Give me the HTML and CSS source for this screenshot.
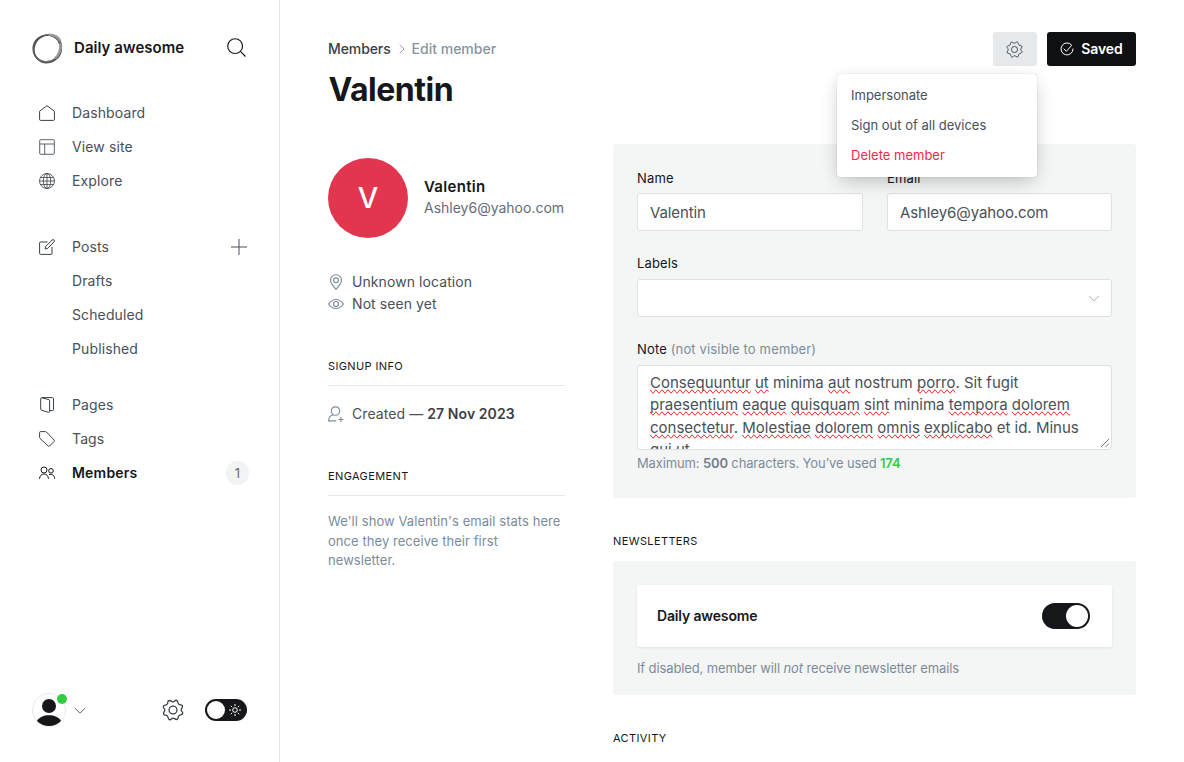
FILE: index.html
```html
<!DOCTYPE html>
<html lang="en">
<head>
<meta charset="utf-8">
<title>Edit member</title>
<link rel="stylesheet" href="styles.css">
</head>
<body>
<svg class="defs" aria-hidden="true">
  <symbol id="gear" viewBox="-12 -12 24 24">
    <path id="tooth" d="M0-8.9C1.8-8.9 2.1-11.3 3.95-10.5S4.9-7.7 6.29-6.29"/>
    <use href="#tooth" transform="rotate(45)"/><use href="#tooth" transform="rotate(90)"/><use href="#tooth" transform="rotate(135)"/><use href="#tooth" transform="rotate(180)"/><use href="#tooth" transform="rotate(225)"/><use href="#tooth" transform="rotate(270)"/><use href="#tooth" transform="rotate(315)"/>
    <circle r="4.3"/>
  </symbol>
</svg>
<div class="app">
  <aside class="sidebar">
    <header class="brand">
      <svg class="logo" viewBox="0 0 30 30"><ellipse cx="14.7" cy="15.2" rx="13.6" ry="13.2" stroke="#444" stroke-width="1.3"/><ellipse cx="15.4" cy="14.8" rx="14" ry="12.4" transform="rotate(-38 15 15)" stroke="#777" stroke-width="1.2"/><ellipse cx="14.8" cy="15.6" rx="12.5" ry="13.6" transform="rotate(25 15 15)" stroke="#555" stroke-width="1.3"/><path d="M16 1.800c5 0 9.500 2 11.200 6.200M27.400 10c.6 6-1 11-5 14.500" stroke="#999" stroke-width="2.400"/></svg>
      <span class="site">Daily awesome</span>
      <svg class="search" viewBox="0 0 18 18"><circle cx="7.700" cy="7.700" r="7"/><path d="M12.700 12.700 17.500 17.500"/></svg>
    </header>
    <nav class="nav">
      <div class="group">
        <a class="item"><svg viewBox="0 0 16 16"><path d="M.6 6.200 8 .7l7.400 5.500v8.200a1 1 0 0 1-1 1H1.600a1 1 0 0 1-1-1z"/></svg>Dashboard</a>
        <a class="item pale"><svg viewBox="0 0 16 16"><rect x=".7" y=".7" width="14.600" height="14.600" rx="1"/><path d="M.5 5h15M5.700 5v10.500"/></svg>View site</a>
        <a class="item"><svg class="thin" viewBox="0 0 16 16"><circle cx="8" cy="8" r="7.500"/><ellipse cx="8" cy="8" rx="3.700" ry="7.500"/><path d="M8 .5v15M.5 8h15M1.500 4.500h13M1.500 11.500h13"/></svg>Explore</a>
      </div>
      <div class="group">
        <a class="item"><svg viewBox="0 0 16 16"><path d="M8.500 3H1.600a1 1 0 0 0-1 1v10.400a1 1 0 0 0 1 1H12a1 1 0 0 0 1-1V8M6.200 10l.6-2.700 6.300-6.300a1.300 1.300 0 0 1 1.900 1.900L8.800 9.300z"/></svg>Posts<svg class="plus" viewBox="0 0 16 16"><path d="M8 0v16M0 8h16"/></svg></a>
        <a class="item sub">Drafts</a>
        <a class="item sub">Scheduled</a>
        <a class="item sub">Published</a>
      </div>
      <div class="group last">
        <a class="item"><svg viewBox="0 0 16 16"><path d="M2.700.600h10.800a1 1 0 0 1 1 1v11a1 1 0 0 1-1 1h-2.900M2.300.700l7.500 1.900a1 1 0 0 1 .8 1v10.900a.8.8 0 0 1-1 .8l-7-2a1 1 0 0 1-.9-1V1.600a.9.900 0 0 1 .6-.9z"/></svg>Pages</a>
        <a class="item"><svg viewBox="0 0 16 16"><path d="M1.600.600h5a1 1 0 0 1 .7.300l7.800 8.100a1.100 1.100 0 0 1 0 1.500l-4.500 4.500a1.100 1.100 0 0 1-1.500 0L.9 7.300a1 1 0 0 1-.3-.7v-5a1 1 0 0 1 1-1z"/></svg>Tags</a>
        <a class="item current"><svg viewBox="0 0 16 16"><circle cx="5" cy="5" r="3"/><circle cx="12" cy="5.800" r="2.300"/><path d="M.5 13.800c.3-3 2-4.800 4.500-4.800s4.200 1.800 4.500 4.800M10 9.700c3-1.200 5.500.600 5.600 4.100"/></svg>Members<span class="count">1</span></a>
      </div>
    </nav>
    <footer class="account">
      <span class="user"><svg viewBox="0 0 34 34"><circle class="ring" cx="17" cy="17" r="16.500"/><circle cx="17" cy="13" r="7"/><path d="M5 27.900c4-7.500 20-7.500 24 0a16.500 16.500 0 0 1-24 0z"/></svg><i class="online"></i></span>
      <svg class="chev" viewBox="0 0 12 7"><path d="M.5.700 6 6.200 11.500.700"/></svg>
      <svg class="settings"><use href="#gear"/></svg>
      <span class="theme"><i></i><svg viewBox="-6 -6 12 12"><circle r="2.300"/><path d="M0-6v2M0 6v-2M-6 0h2M6 0h-2M-4.200-4.200l1.400 1.400M4.200 4.200 2.800 2.800M-4.200 4.200l1.400-1.400M4.200-4.200 2.800-2.800"/></svg></span>
    </footer>
  </aside>
  <main class="main">
    <header class="top">
      <div>
        <div class="crumbs"><span>Members</span><svg viewBox="0 0 6 10"><path d="M.7.700 5 5 .7 9.300"/></svg><b>Edit member</b></div>
        <h1>Valentin</h1>
      </div>
      <div class="actions">
        <button class="gearbtn"><svg><use href="#gear"/></svg></button>
        <button class="saved"><svg viewBox="0 0 14 14"><path d="M11.800 3.300A6 6 0 1 0 13 6.500M3.800 6.700l2.500 2.600 5.500-6"/></svg>Saved</button>
        <div class="menu"><a>Impersonate</a><a>Sign out of all devices</a><a class="danger">Delete member</a></div>
      </div>
    </header>
    <div class="columns">
      <section class="profile">
        <div class="person"><span class="avatar">V</span><div><h3>Valentin</h3><p>Ashley6@yahoo.com</p></div></div>
        <div class="facts">
          <p><svg viewBox="0 0 16 16"><path d="M8 15.300C5 12 2.500 9.400 2.500 6.200a5.500 5.500 0 0 1 11 0c0 3.200-2.500 5.800-5.500 9.100z"/><circle cx="8" cy="6.300" r="2.400"/></svg>Unknown location</p>
          <p><svg viewBox="0 0 16 16"><path d="M.6 8C4.500 2 11.500 2 15.400 8 11.500 14 4.500 14 .6 8z"/><circle cx="8" cy="8" r="2.500"/></svg>Not seen yet</p>
        </div>
        <h4 class="ruled">Signup info</h4>
        <p class="created"><svg viewBox="0 0 16 16"><circle cx="7.500" cy="5" r="4.200"/><path d="M5.500 8.800C2.500 9.500.7 11.500.6 14.800h7.600M12.900 11v5M10.400 13.500h5"/></svg>Created —&nbsp;<b>27 Nov 2023</b></p>
        <h4 class="ruled engagement">Engagement</h4>
        <p class="hint">We'll show Valentin's email stats here once they receive their first newsletter.</p>
      </section>
      <section class="details">
        <div class="panel form">
          <div class="pair">
            <label>Name<span class="field">Valentin</span></label>
            <label>Email<span class="field">Ashley6@yahoo.com</span></label>
          </div>
          <label class="labels">Labels<span class="field select"><svg viewBox="0 0 12 7"><path d="M1 .8l5 5 5-5"/></svg></span></label>
          <label class="note"><span>Note <em>(not visible to member)</em></span>
            <span class="area"><u>Consequuntur</u> <u>ut</u> minima <u>aut</u> nostrum <u>porro</u>. Sit fugit<br><u>praesentium</u> <u>eaque</u> <u>quisquam</u> <u>sint</u> minima <u>tempora</u> <u>dolorem</u><br><u>consectetur</u>. <u>Molestiae</u> <u>dolorem</u> <u>omnis</u> <u>explicabo</u> et id. Minus<br>qui ut.<svg class="grip" viewBox="0 0 10 10"><path d="M1 9l8-8M5.500 9 9 5.500"/></svg></span></label>
          <p class="limit">Maximum: <b>500</b> characters. You’ve used <b class="used">174</b></p>
        </div>
        <h4>Newsletters</h4>
        <div class="panel news">
          <div class="card"><span>Daily awesome</span><i class="switch"></i></div>
          <p>If disabled, member will <em>not</em> receive newsletter emails</p>
        </div>
        <h4 class="activity">Activity</h4>
      </section>
    </div>
  </main>
</div>
</body>
</html>
```
FILE: styles.css
```css
* { box-sizing: border-box; }
body, h1, h3, h4, p { margin: 0; }
body { font-family: Inter, "Liberation Sans", sans-serif; font-size: 14px; color: #15171a; background: #fff; overflow: hidden; }
svg { fill: none; stroke: currentColor; flex: none; display: block; }
button { border: 0; padding: 0; font: inherit; }
.defs { position: absolute; width: 0; height: 0; }
.app { display: flex; height: 762px; overflow: hidden; }

.sidebar { width: 280px; flex: none; border-right: 1px solid #e3e6e8; display: flex; flex-direction: column; padding: 32px 31px 35px 32px; }
.brand { display: flex; align-items: center; height: 32px; margin-bottom: 32px; }
.logo { width: 31px; height: 31px; }
.site { font-size: 15px; font-weight: 600; margin-left: 11px; letter-spacing: .05px; padding-bottom: 2px; }
.search { width: 19px; height: 19px; margin: 0 2px 1px auto; stroke-width: 1.1; }
.group { margin-bottom: 32px; }
.group + .group { margin-bottom: 22px; }
.item { display: flex; align-items: center; height: 34px; padding: 0 0 2px 7px; color: #495058; font-size: 14px; letter-spacing: .12px; }
.item > svg:first-child { width: 16px; height: 16px; margin: 2px 17px 0 0; color: #394047; }
.item.pale > svg:first-child { color: #59636e; }
.item > svg.thin { stroke-width: .8; }
.item.sub { padding-left: 40px; }
.item .plus { width: 16px; height: 16px; margin: 2px 1px 0 auto; }
.item.current { color: #15171a; font-weight: 600; letter-spacing: .2px; }
.item.current > svg:first-child { color: #15171a; }
.count { margin: 2px -1px 0 auto; padding-bottom: 1px; width: 23px; height: 24px; border-radius: 12px; background: #f1f3f4; color: #626d79; font-size: 13px; font-weight: 400; letter-spacing: 0; display: flex; align-items: center; justify-content: center; }
.account { margin-top: auto; display: flex; align-items: center; height: 34px; }
.user { position: relative; width: 34px; height: 34px; }
.user svg { width: 34px; height: 34px; fill: #15171a; stroke: none; }
.user .ring { fill: #fff; stroke: #e8eaed; }
.online { position: absolute; right: -1px; top: 1px; width: 10px; height: 10px; border-radius: 50%; background: #30cf43; }
.chev { width: 12px; height: 7px; margin-left: 8px; color: #626d79; }
.settings { width: 22px; height: 22px; margin-left: auto; margin-right: 21px; color: #394047; stroke-width: 1.4; }
.theme { width: 42px; height: 22px; border-radius: 11px; background: #15171a; display: flex; align-items: center; justify-content: space-between; padding: 0 6px 0 2px; margin-right: 1px; }
.theme i { width: 18px; height: 18px; border-radius: 50%; background: #fff; }
.theme svg { width: 12px; height: 12px; color: #fff; }

.main { flex: 1; padding: 32px 48px 0; }
.top { display: flex; justify-content: space-between; height: 112px; }
.crumbs { display: flex; align-items: center; height: 34px; padding-bottom: 2px; font-weight: 500; color: #394047; letter-spacing: -.1px; }
.crumbs svg { width: 6px; height: 10px; margin: 2px 7px 0 8px; color: #95a1ad; }
.crumbs b { font-weight: 500; color: #8595a3; letter-spacing: 0; }
h1 { font-size: 32px; line-height: 40px; font-weight: 700; letter-spacing: -.5px; margin-top: 4px; padding-left: .5px; }
.actions { position: relative; display: flex; gap: 10px; height: 34px; }
.gearbtn { width: 44px; border-radius: 3px; background: #e6e9eb; color: #394047; display: flex; align-items: center; justify-content: center; }
.gearbtn svg { width: 17px; height: 17px; stroke-width: 1.3; margin-right: 1px; }
.saved { width: 89px; padding-bottom: 2px; border-radius: 3px; background: #0f1011; color: #fff; font-weight: 600; letter-spacing: -.1px; display: flex; align-items: center; justify-content: center; gap: 7px; }
.saved svg { width: 14px; height: 14px; margin-top: 2px; }
.menu { position: absolute; z-index: 2; right: 99px; top: 42px; width: 200px; height: 103px; padding: 6px 0; background: #fff; border-radius: 3px; box-shadow: 0 0 1px rgba(0,0,0,.3), 0 7px 20px -5px rgba(0,0,0,.22), 0 3px 16px rgba(0,0,0,.06); }
.menu a { display: block; height: 30px; line-height: 30px; padding-left: 14px; font-size: 13px; letter-spacing: 0; color: #495058; }
.menu .danger { color: #fa2846; }

.columns { display: grid; grid-template-columns: 237px 523px; gap: 48px; }
.profile { padding-top: 14px; }
.person { display: flex; align-items: center; gap: 16px; }
.avatar { flex: none; width: 80px; height: 80px; padding-bottom: 1px; border-radius: 50%; background: #e2364f; color: #fff; font-size: 29px; font-weight: 500; display: flex; align-items: center; justify-content: center; }
.person h3 { font-size: 15px; line-height: 22px; font-weight: 600; letter-spacing: .3px; }
.person p { line-height: 20px; padding-bottom: 2px; color: #626d79; letter-spacing: 0; }
.facts { margin-top: 33px; color: #495058; }
.facts p, .created { display: flex; align-items: center; height: 22px; padding-bottom: 2px; letter-spacing: .08px; color: #495058; }
.facts svg, .created svg { width: 16px; height: 16px; margin: 1px 8px 0 0; color: #7c8b9a; stroke-width: 1.15; }
h4 { font-size: 11px; font-weight: 400; letter-spacing: .38px; line-height: 16px; text-transform: uppercase; }
.ruled { margin-top: 43px; height: 28px; border-bottom: 1px solid #e6e9eb; }
.created { margin-top: 17px; }
.created b { font-weight: 600; color: #394047; }
.engagement { margin-top: 43px; }
.hint { margin-top: 16px; font-size: 13px; line-height: 19.500px; letter-spacing: .06px; color: #7c8b9a; }

.panel { background: #f4f6f6; border-radius: 3px; padding: 24px; }
.form { height: 354px; }
.form label { display: block; font-size: 13px; line-height: 20px; font-weight: 400; letter-spacing: .15px; }
.pair { display: grid; grid-template-columns: 226px 225px; gap: 24px; }
.field { display: flex; align-items: center; height: 38px; margin-top: 5px; padding: 2px 12px 0; background: #fff; border: 1px solid #dde1e3; border-radius: 3px; font-size: 15px; font-weight: 400; letter-spacing: -.1px; color: #495058; }
.form .labels { margin-top: 22px; }
.labels .field { margin-top: 6px; padding-top: 0; }
.select { justify-content: flex-end; }
.select svg { width: 12px; height: 7px; color: #a5afb8; margin-right: -1px; }
.form .note { margin-top: 22px; }
.note em { font-style: normal; color: #7c8b9a; }
.area { position: relative; display: block; margin-top: 6px; height: 85px; padding: 6px 12px; overflow: hidden; background: #fff; border: 1px solid #dde1e3; border-radius: 3px; font-size: 15px; line-height: 22.400px; letter-spacing: 0; color: #495058; }
.area u { text-decoration: spelling-error; }
.grip { position: absolute; right: 1px; bottom: 1px; width: 10px; height: 10px; color: #555; stroke-width: .8; }
.limit { font-size: 13px; line-height: 20px; margin-top: 3px; color: #7c8b9a; letter-spacing: -.14px; }
.limit b { font-weight: 600; color: #6f7d8b; }
.limit .used { color: #30cf43; }
.details h4 { margin-top: 35px; margin-bottom: 12px; }
.news { height: 134px; }
.card { display: flex; align-items: center; justify-content: space-between; height: 62px; padding: 0 22px 0 20px; background: #fff; border-radius: 3px; box-shadow: 0 1px 3px rgba(0,0,0,.08); font-weight: 600; letter-spacing: -.15px; }
.card span { padding-bottom: 2px; }
.switch { width: 48px; height: 26px; border-radius: 13px; background: #15171a; padding: 2px; display: flex; justify-content: flex-end; }
.switch::after { content: ""; width: 22px; height: 22px; border-radius: 50%; background: #fff; }
.news p { margin-top: 11px; font-size: 13px; line-height: 20px; letter-spacing: -.12px; color: #7c8b9a; }
```
